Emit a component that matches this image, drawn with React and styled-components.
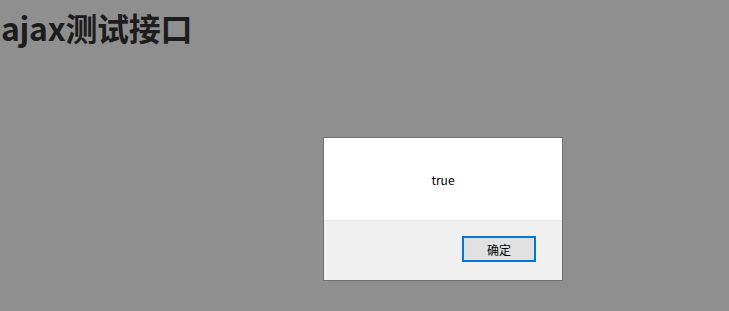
import React from "react";
import styled, { createGlobalStyle } from "styled-components";

const Global = createGlobalStyle`
  html, body { margin: 0; padding: 0; background: #8f8f8f; }
  body { font-family: "Noto Sans CJK SC", "Microsoft YaHei", sans-serif; }
`;

const Page = styled.div`
  width: 729px;
  height: 311px;
  background: #8f8f8f;
  position: relative;
  overflow: hidden;
`;

const Title = styled.h1`
  margin: 0;
  padding: 4px 0 0 1px;
  font-size: 32px;
  line-height: 46px;
  font-weight: 700;
  letter-spacing: -0.3px;
  color: #1d1d1d;
  font-family: "Noto Sans CJK SC", sans-serif;
`;

const Dialog = styled.div`
  position: absolute;
  left: 323px;
  top: 137px;
  width: 238px;
  border: 1px solid #707070;
  background: #f0f0f0;
  display: flex;
  flex-direction: column;
`;

const Body = styled.div`
  height: 82px;
  background: #ffffff;
  border-bottom: 1px solid #e6e6e6;
  display: flex;
  align-items: center;
  justify-content: center;
  font-size: 12px;
  color: #000;
`;

const Footer = styled.div`
  height: 59px;
  display: flex;
  justify-content: flex-end;
  align-items: flex-start;
  padding: 15px 26px 0 0;
  box-sizing: border-box;
`;

const Button = styled.button`
  width: 74px;
  height: 26px;
  border: 2px solid #0078d7;
  background: #e1e1e1;
  font-family: "Noto Sans CJK SC", sans-serif;
  font-size: 12px;
  color: #000;
  padding: 0;
  display: flex;
  align-items: center;
  justify-content: center;
`;

export default function App() {
  return (
    <Page>
      <Global />
      <Title>ajax测试接口</Title>
      <Dialog>
        <Body>true</Body>
        <Footer>
          <Button>确定</Button>
        </Footer>
      </Dialog>
    </Page>
  );
}
